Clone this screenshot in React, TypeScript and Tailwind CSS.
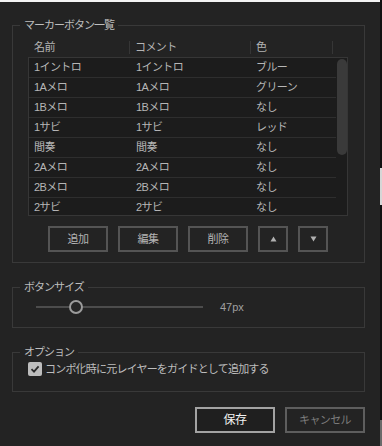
const rows: [string, string, string][] = [
  ["1イントロ", "1イントロ", "ブルー"],
  ["1Aメロ", "1Aメロ", "グリーン"],
  ["1Bメロ", "1Bメロ", "なし"],
  ["1サビ", "1サビ", "レッド"],
  ["間奏", "間奏", "なし"],
  ["2Aメロ", "2Aメロ", "なし"],
  ["2Bメロ", "2Bメロ", "なし"],
  ["2サビ", "2サビ", "なし"],
];

const font = "font-['Liberation_Sans','Noto_Sans_CJK_JP',sans-serif]";

function Group({ title, className, children }: { title: string; className?: string; children: React.ReactNode }) {
  return (
    <fieldset className={`w-[353px] border border-[#393939] px-[7px] ${className ?? ""}`}>
      <legend className="px-[4px] text-[11px] leading-[14px] tracking-[-1px] text-[#bdbdbd]">{title}</legend>
      {children}
    </fieldset>
  );
}

function Btn({ children, className }: { children: React.ReactNode; className?: string }) {
  return (
    <button
      className={`flex h-[26px] items-center justify-center border-2 border-[#545454] bg-[#232323] text-[11px] tracking-[-0.6px] text-[#b4b4b4] ${className ?? ""}`}
    >
      {children}
    </button>
  );
}

export default function App() {
  return (
    <div className={`flex h-[446px] w-[382px] bg-[#232323] ${font}`}>
      <div className="flex w-[380px] flex-col">
        <div className="h-[2px] w-full bg-[#f4f4f4]" />
        <div className="flex flex-col px-[12px] pt-[16px]">
          <Group title="マーカーボタン一覧">
            <div className="ml-[8px] pt-[5px] pb-[10px]">
              <div className="flex h-[20px] w-[320px] items-center text-[11px] tracking-[-0.6px] text-[#b4b4b4]">
                <div className="w-[101px] pl-[6px]">名前</div>
                <div className="h-[13px] w-px bg-[#363636]" />
                <div className="w-[120px] pl-[5px]">コメント</div>
                <div className="h-[13px] w-px bg-[#363636]" />
                <div className="w-[81px] pl-[5px]">色</div>
                <div className="h-[13px] w-px bg-[#363636]" />
              </div>
              <div className="flex h-[159px] w-[320px] overflow-hidden border border-[#363636] bg-[#1c1c1c]">
                <div className="flex w-[307px] flex-col">
                  {rows.map((r, i) => (
                    <div
                      key={i}
                      className="flex h-[20px] shrink-0 items-center border-b border-[#2e2e2e] text-[11px] tracking-[-0.6px] text-[#b6b6b6]"
                    >
                      <div className="w-[100px] pl-[5px]">{r[0]}</div>
                      <div className="w-[121px] pl-[7px]">{r[1]}</div>
                      <div className="pl-[6px]">{r[2]}</div>
                    </div>
                  ))}
                </div>
                <div className="flex w-[11px] flex-col pl-px pt-px">
                  <div className="h-[96px] w-[10px] rounded-[5px] bg-[#3a3a3a]" />
                </div>
              </div>
              <div className="mt-[10px] flex w-[320px] justify-center gap-[10px]">
                <Btn className="w-[60px]">追加</Btn>
                <Btn className="w-[60px]">編集</Btn>
                <Btn className="w-[60px]">削除</Btn>
                <Btn className="w-[30px]">
                  <svg width="7" height="6" viewBox="0 0 7 6">
                    <path d="M3.5 0.5 L6.5 5.5 L0.5 5.5 Z" fill="#b0b0b0" />
                  </svg>
                </Btn>
                <Btn className="w-[30px]">
                  <svg width="7" height="6" viewBox="0 0 7 6">
                    <path d="M0.5 0.5 L6.5 0.5 L3.5 5.5 Z" fill="#b0b0b0" />
                  </svg>
                </Btn>
              </div>
            </div>
          </Group>

          <Group title="ボタンサイズ" className="mt-[17px]">
            <div className="mt-[3px] mb-[10px] ml-[16px] flex h-[20px] items-center">
              <div className="h-[2px] w-[33px] bg-[#4c4c4c]" />
              <div className="h-[14px] w-[14px] rounded-full border-2 border-[#9c9c9c] bg-[#262626]" />
              <div className="h-[2px] w-[120px] bg-[#4c4c4c]" />
              <span className="ml-[17px] text-[11px] text-[#a0a0a0]">47px</span>
            </div>
          </Group>

          <Group title="オプション" className="mt-[17px]">
            <label className="ml-[8px] mt-[2px] mb-[14px] flex h-[16px] items-center gap-[3px]">
              <span className="flex h-[14px] w-[14px] items-center justify-center rounded-[2px] bg-[#bdbdbd]">
                <svg width="10" height="10" viewBox="0 0 10 10">
                  <path d="M1.5 5.2 L4 7.6 L8.6 2.4" stroke="#2a2a2a" strokeWidth="1.8" fill="none" />
                </svg>
              </span>
              <span className="text-[11px] tracking-[-0.8px] text-[#bdbdbd]">コンポ化時に元レイヤーをガイドとして追加する</span>
            </label>
          </Group>

          <div className="mt-[15px] flex w-[353px] justify-end gap-[10px]">
            <button className="flex h-[26px] w-[80px] items-center justify-center border-2 border-[#a3a3a3] bg-[#1f1f1f] text-[12px] tracking-[-0.5px] text-[#f2f2f2]">
              保存
            </button>
            <button className="flex h-[26px] w-[80px] items-center justify-center border-2 border-[#5e5e5e] bg-[#232323] text-[11px] tracking-[-0.6px] text-[#7c7c7c]">
              キャンセル
            </button>
          </div>
        </div>
      </div>
      <div className="flex w-[2px] flex-col bg-[#121212]">
        <div className="h-[168px]" />
        <div className="h-[37px] bg-[#d6d6d6]" />
        <div className="h-[215px]" />
        <div className="h-[26px] bg-[#6a6a6a]" />
      </div>
    </div>
  );
}
